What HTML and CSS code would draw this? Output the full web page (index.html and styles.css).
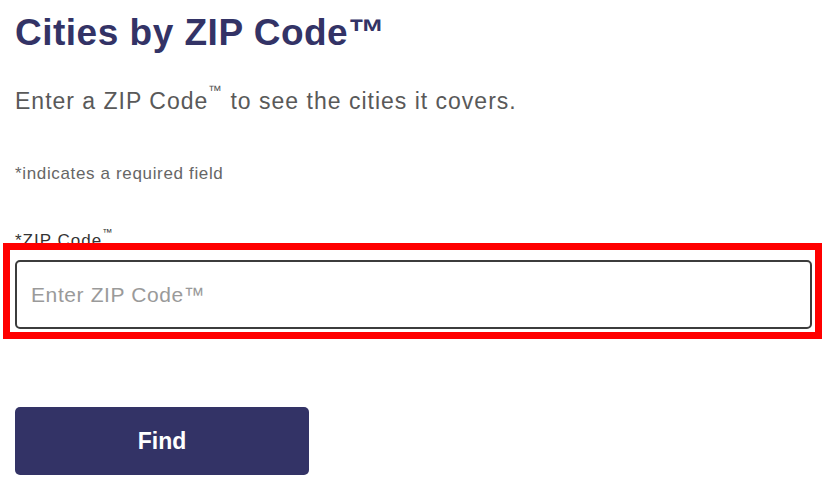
FILE: index.html
```html
<!DOCTYPE html>
<html lang="en">
<head>
<meta charset="UTF-8" />
<meta name="viewport" content="width=device-width, initial-scale=1" />
<title>Cities by ZIP Code</title>
<link rel="stylesheet" href="styles.css">
</head>
<body>
  <main class="lookup">
    <h1 class="lookup-title">Cities by ZIP Code&trade;</h1>
    <p class="lookup-intro">Enter a ZIP Code<sup>&trade;</sup> to see the cities it covers.</p>
    <p class="lookup-note">*indicates a required field</p>

    <form class="lookup-form" onsubmit="return false;">
      <label class="field-label" for="zip">*ZIP Code<sup>&trade;</sup></label>
      <input class="field-input" id="zip" type="text" placeholder="Enter ZIP Code&trade;" />
      <button class="find-btn" type="submit">Find</button>
    </form>
  </main>

  <!-- annotation box over the input -->
  <div class="highlight" aria-hidden="true"></div>
</body>
</html>
```

FILE: styles.css
```css
/* Reset and base */
* {
  box-sizing: border-box;
}
body {
  margin: 0;
  position: relative;
  background: #ffffff;
  font-family: "Liberation Sans", Arial, sans-serif;
  color: #333333;
}

.lookup {
  padding: 11px 18px 0 15px;
}

.lookup-title {
  margin: 0;
  font-size: 37px;
  line-height: 44px;
  font-weight: bold;
  letter-spacing: 0.5px;
  color: #333366;
}

.lookup-intro {
  margin: 32px 0 0;
  font-size: 23px;
  line-height: 28px;
  letter-spacing: 1px;
  color: #595959;
}

.lookup-intro sup,
.field-label sup {
  font-size: 0.6em;
  line-height: 0;
  vertical-align: 1em;
}

.lookup-note {
  margin: 49px 0 0;
  font-size: 17px;
  line-height: 20px;
  letter-spacing: 0.65px;
  color: #666666;
}

.lookup-form {
  margin-top: 47px;
  display: flex;
  flex-direction: column;
  align-items: flex-start;
}

.field-label {
  font-size: 17px;
  line-height: 20px;
  letter-spacing: 1px;
  color: #333333;
}

.field-input {
  margin-top: 9px;
  width: 100%;
  height: 69px;
  padding: 0 14px;
  border: 2px solid #3c3c3c;
  border-radius: 5px;
  font-family: inherit;
  font-size: 21px;
  letter-spacing: 0.6px;
  color: #333333;
  background: #ffffff;
}

.field-input::placeholder {
  color: #9a9a9a;
}

.find-btn {
  margin-top: 78px;
  width: 294px;
  height: 68px;
  border: none;
  border-radius: 5px;
  background: #333366;
  color: #ffffff;
  font-family: inherit;
  font-size: 23px;
  font-weight: bold;
  cursor: pointer;
}

.find-btn:hover {
  background: #25254d;
}

/* Red annotation frame */
.highlight {
  position: absolute;
  left: 3px;
  top: 243px;
  width: 819px;
  height: 96px;
  border: 7px solid #ff0000;
  pointer-events: none;
}
```
